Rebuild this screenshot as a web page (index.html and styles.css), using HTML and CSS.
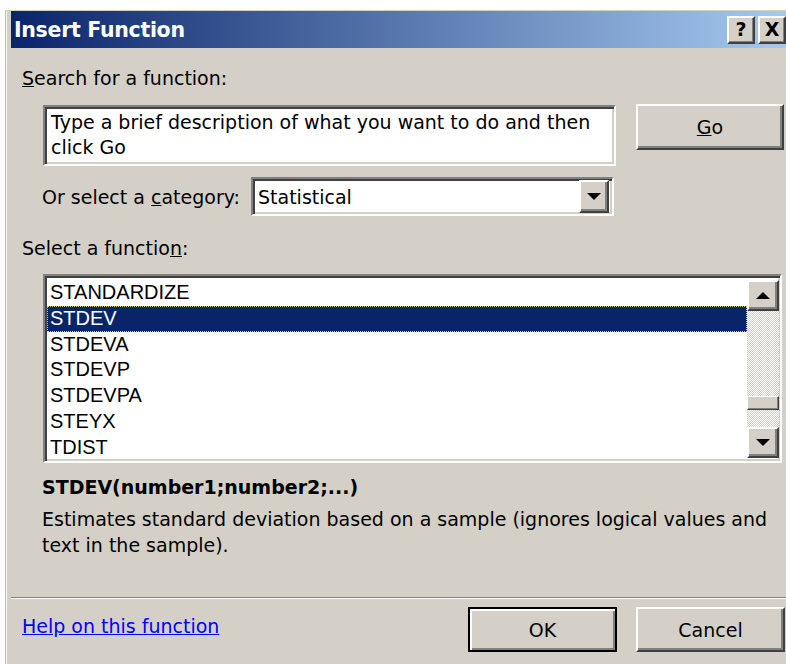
FILE: index.html
```html
<!DOCTYPE html>
<html lang="en">
<head>
<meta charset="utf-8">
<title>Insert Function</title>
<link rel="stylesheet" href="styles.css">
</head>
<body>
<div class="window">
  <div class="titlebar">
    <span class="title">Insert Function</span>
    <div class="caption-buttons">
      <span class="cap-btn">?</span>
      <span class="cap-btn cap-close">X</span>
    </div>
  </div>

  <div class="content">
    <div class="label"><u>S</u>earch for a function:</div>

    <div class="search-row">
      <div class="field textbox">Type a brief description of what you want to do and then click Go</div>
      <button class="btn go-btn"><u>G</u>o</button>
    </div>

    <div class="category-row">
      <span class="label-inline">Or select a <u>c</u>ategory:</span>
      <div class="field select">
        <span class="select-value">Statistical</span>
        <span class="arrow-btn"><span class="tri-down"></span></span>
      </div>
    </div>

    <div class="label fn-label">Select a functio<u>n</u>:</div>

    <div class="field listbox">
      <ul class="items">
        <li>STANDARDIZE</li>
        <li class="selected">STDEV</li>
        <li>STDEVA</li>
        <li>STDEVP</li>
        <li>STDEVPA</li>
        <li>STEYX</li>
        <li>TDIST</li>
      </ul>
      <div class="scrollbar">
        <span class="sb-btn"><span class="tri-up"></span></span>
        <div class="sb-track">
          <span class="sb-thumb"></span>
        </div>
        <span class="sb-btn"><span class="tri-down"></span></span>
      </div>
    </div>

    <div class="signature">STDEV(number1;number2;...)</div>
    <p class="description">Estimates standard deviation based on a sample (ignores logical values and text in the sample).</p>

    <div class="separator"></div>

    <div class="footer">
      <a class="help-link" href="#">Help on this function</a>
      <div class="footer-buttons">
        <button class="btn default-btn">OK</button>
        <button class="btn">Cancel</button>
      </div>
    </div>
  </div>
</div>
</body>
</html>
```

FILE: styles.css
```css
html, body {
  margin: 0;
  padding: 0;
  background: #ffffff;
  overflow: hidden;
  height: 664px;
}

body {
  font-family: "DejaVu Sans", sans-serif;
  font-size: 19px;
  color: #000000;
}

.window {
  width: 779px;
  height: 660px;
  margin: 10px 0 0 5px;
  padding: 0 0 0 5px;
  background: #d4d0c8;
  border-left: 1px solid #c4c0b8;
  border-top: 1px solid #d4d0c8;
  box-shadow: inset 1px 0 0 #f4f3f0;
  box-sizing: content-box;
}

/* caption */
.titlebar {
  height: 37px;
  display: flex;
  align-items: center;
  justify-content: space-between;
  padding-left: 3px;
  background: linear-gradient(to right, #0a246a 0%, #a6caf0 100%);
}

.title {
  color: #ffffff;
  font-weight: bold;
  font-size: 20.5px;
  letter-spacing: -0.3px;
}

.caption-buttons {
  display: flex;
  gap: 3px;
  margin-right: 4px;
}

.cap-btn {
  width: 28px;
  height: 28px;
  box-sizing: border-box;
  display: flex;
  align-items: center;
  justify-content: center;
  background: #d4d0c8;
  border: 2px solid;
  border-color: #ffffff #404040 #404040 #ffffff;
  box-shadow: inset -1px -1px 0 #808080;
  font-weight: bold;
  font-size: 19px;
  line-height: 1;
}

/* dialog body */
.content {
  padding-left: 11px;
}

.label {
  line-height: 24px;
  margin-top: 18px;
}

.fn-label {
  margin-top: 20px;
}

.field {
  box-sizing: border-box;
  background: #ffffff;
  border: 2px solid;
  border-color: #808080 #ffffff #ffffff #808080;
  box-shadow: inset 2px 2px 0 #404040, inset -2px -2px 0 #d4d0c8;
}

.search-row {
  display: flex;
  align-items: flex-start;
  margin-top: 14px;
}

.textbox {
  width: 573px;
  height: 61px;
  margin: 1px 0 0 21px;
  padding: 3px 6px 0 6px;
  line-height: 25px;
}

.btn {
  box-sizing: border-box;
  width: 149px;
  height: 45px;
  background: #d4d0c8;
  border: 2px solid;
  border-color: #ffffff #404040 #404040 #ffffff;
  box-shadow: inset -2px -2px 0 #808080;
  font-family: inherit;
  font-size: 19px;
  color: #000000;
  padding: 0;
}

.go-btn {
  width: 148px;
  height: 46px;
  margin-left: 20px;
}

.category-row {
  display: flex;
  align-items: center;
  margin-top: 11px;
  margin-left: 20px;
}

.label-inline {
  width: 209px;
}

.select {
  width: 363px;
  height: 39px;
  display: flex;
  align-items: center;
  justify-content: space-between;
  padding: 0 3px 0 5px;
}

.arrow-btn {
  width: 30px;
  height: 33px;
  box-sizing: border-box;
  display: flex;
  align-items: center;
  justify-content: center;
  background: #d4d0c8;
  border: 2px solid;
  border-color: #ffffff #404040 #404040 #ffffff;
  box-shadow: inset -2px -2px 0 #808080;
}

.tri-down,
.tri-up {
  width: 0;
  height: 0;
  border-left: 7px solid transparent;
  border-right: 7px solid transparent;
}

.tri-down {
  border-top: 7px solid #000000;
}

.tri-up {
  border-bottom: 7px solid #000000;
}

/* function list */
.listbox {
  width: 739px;
  height: 189px;
  margin: 14px 0 0 21px;
  display: flex;
  padding: 4px 1px 3px 2px;
  overflow: hidden;
}

.items {
  list-style: none;
  margin: 0;
  padding: 0;
  flex: 1;
  font-family: "Liberation Sans", "DejaVu Sans", sans-serif;
  font-size: 20px;
}

.items li {
  height: 25.8px;
  line-height: 25.8px;
  padding-left: 3px;
  white-space: nowrap;
}

.items li.selected {
  background: #0a246a;
  color: #ffffff;
  outline: 1px dotted #d8c87a;
  outline-offset: -1px;
}

.scrollbar {
  width: 32px;
  display: flex;
  flex-direction: column;
}

.sb-btn {
  height: 31px;
  box-sizing: border-box;
  display: flex;
  align-items: center;
  justify-content: center;
  background: #d4d0c8;
  border: 2px solid;
  border-color: #ffffff #404040 #404040 #ffffff;
  box-shadow: inset -2px -2px 0 #808080;
  flex: none;
}

.sb-track {
  flex: 1;
  display: flex;
  flex-direction: column;
  justify-content: flex-end;
  padding-bottom: 17px;
  background: repeating-conic-gradient(#d4d0c8 0 25%, #ffffff 0 50%) 0 0 / 2px 2px;
}

.sb-thumb {
  height: 14px;
  box-sizing: border-box;
  background: #d4d0c8;
  border: 1px solid;
  border-color: #ffffff #404040 #404040 #ffffff;
  box-shadow: inset -1px -1px 0 #808080;
}

/* selected function details */
.signature {
  font-weight: bold;
  line-height: 24px;
  margin: 12px 0 0 20px;
}

.description {
  margin: 7px 0 0 20px;
  line-height: 26px;
  width: 735px;
}

.separator {
  margin: 39px 0 0 -11px;
  height: 1px;
  background: #808080;
  border-bottom: 1px solid #ffffff;
}

.footer {
  display: flex;
  justify-content: space-between;
  align-items: flex-start;
  margin-top: 8px;
}

.help-link {
  color: #0000ff;
  text-decoration: underline;
  line-height: 24px;
  margin: 7px 0 0 0;
}

.footer-buttons {
  display: flex;
  gap: 19px;
  margin-right: 5px;
}

.default-btn {
  border: 2px solid #000000;
  box-shadow: inset 2px 2px 0 #ffffff, inset -2px -2px 0 #808080;
}
```
